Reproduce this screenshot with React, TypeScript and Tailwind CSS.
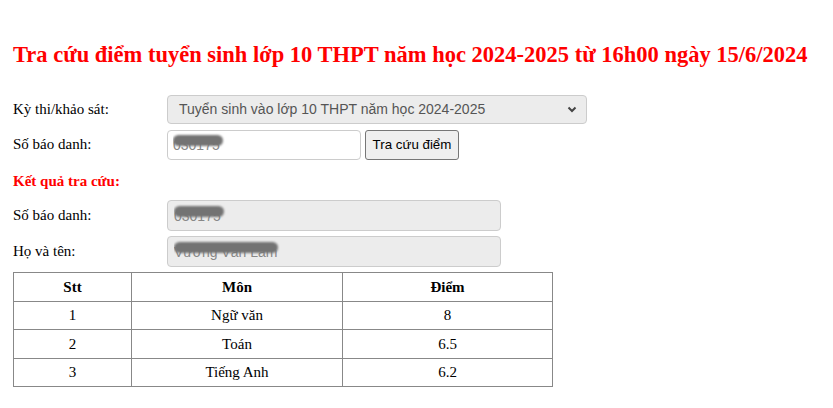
import React from "react";

const serif = { fontFamily: '"Liberation Serif", "Times New Roman", serif' };
const sans = { fontFamily: '"Liberation Sans", Arial, sans-serif' };

function Blob({ w, text }: { w: number; text: string }) {
  return (
    <span className="relative inline-block overflow-hidden" style={{ width: w + 2 }}>
      <span className="text-[14px] text-[#888] whitespace-nowrap" style={sans}>{text}</span>
      <span
        className="absolute left-0 top-[2px] h-[11px] rounded-full bg-[#737373] blur-[1px]"
        style={{ width: w }}
      />
    </span>
  );
}

export default function App() {
  const rows = [
    ["1", "Ngữ văn", "8"],
    ["2", "Toán", "6.5"],
    ["3", "Tiếng Anh", "6.2"],
  ];
  return (
    <div className="w-[833px] h-[408px] bg-white pl-[13px] overflow-hidden" style={serif}>
      <h1 className="mt-[40px] text-[22.5px] leading-[30px] font-bold text-[#ff0000] whitespace-nowrap">
        Tra cứu điểm tuyển sinh lớp 10 THPT năm học 2024-2025 từ 16h00 ngày 15/6/2024
      </h1>

      <div className="mt-[25px] flex flex-col gap-[5px]">
        <div className="flex items-center h-[29px]">
          <div className="w-[154px] text-[15px] text-black">Kỳ thi/khảo sát:</div>
          <div className="w-[420px] h-[29px] rounded-[4px] border border-[#ccc] bg-[#ececec] flex items-center justify-between pl-[11px] pr-[9px]">
            <span className="text-[14px] text-[#555]" style={sans}>Tuyển sinh vào lớp 10 THPT năm học 2024-2025</span>
            <svg width="10" height="7" viewBox="0 0 10 7">
              <path d="M1.5 1.5 L5 5 L8.5 1.5" stroke="#444" strokeWidth="2" fill="none" />
            </svg>
          </div>
        </div>
        <div className="flex items-center h-[31px]">
          <div className="w-[154px] text-[15px] text-black">Số báo danh:</div>
          <div className="w-[194px] h-[30px] rounded-[4px] border border-[#ccc] bg-white flex items-center pl-[5px]">
            <Blob w={50} text="030175" />
          </div>
          <button className="ml-[4px] w-[94px] h-[30px] rounded-[3px] border border-[#767676] bg-[#efefef] text-[13.33px] text-black" style={sans}>
            Tra cứu điểm
          </button>
        </div>
      </div>

      <div className="mt-[12px] text-[15px] font-bold text-[#ff0000] leading-[18px]">Kết quả tra cứu:</div>

      <div className="mt-[10px] flex flex-col gap-[5px]">
        <div className="flex items-center">
          <div className="w-[154px] text-[15px] text-black">Số báo danh:</div>
          <div className="w-[334px] h-[31px] rounded-[4px] border border-[#ccc] bg-[#ececec] flex items-center pl-[6px]">
            <Blob w={50} text="030175" />
          </div>
        </div>
        <div className="flex items-center">
          <div className="w-[154px] text-[15px] text-black">Họ và tên:</div>
          <div className="w-[334px] h-[31px] rounded-[4px] border border-[#ccc] bg-[#ececec] flex items-center pl-[6px]">
            <Blob w={104} text="Vương Văn Lâm" />
          </div>
        </div>
      </div>

      <table className="mt-[5px] w-[540px] border-collapse text-[15px] text-black">
        <thead>
          <tr className="h-[28.5px]">
            <th className="w-[118px] border border-[#888] font-bold">Stt</th>
            <th className="w-[211px] border border-[#888] font-bold">Môn</th>
            <th className="border border-[#888] font-bold">Điểm</th>
          </tr>
        </thead>
        <tbody>
          {rows.map((r) => (
            <tr key={r[0]} className="h-[28.5px]">
              <td className="border border-[#888] text-center">{r[0]}</td>
              <td className="border border-[#888] text-center">{r[1]}</td>
              <td className="border border-[#888] text-center">{r[2]}</td>
            </tr>
          ))}
        </tbody>
      </table>
    </div>
  );
}
